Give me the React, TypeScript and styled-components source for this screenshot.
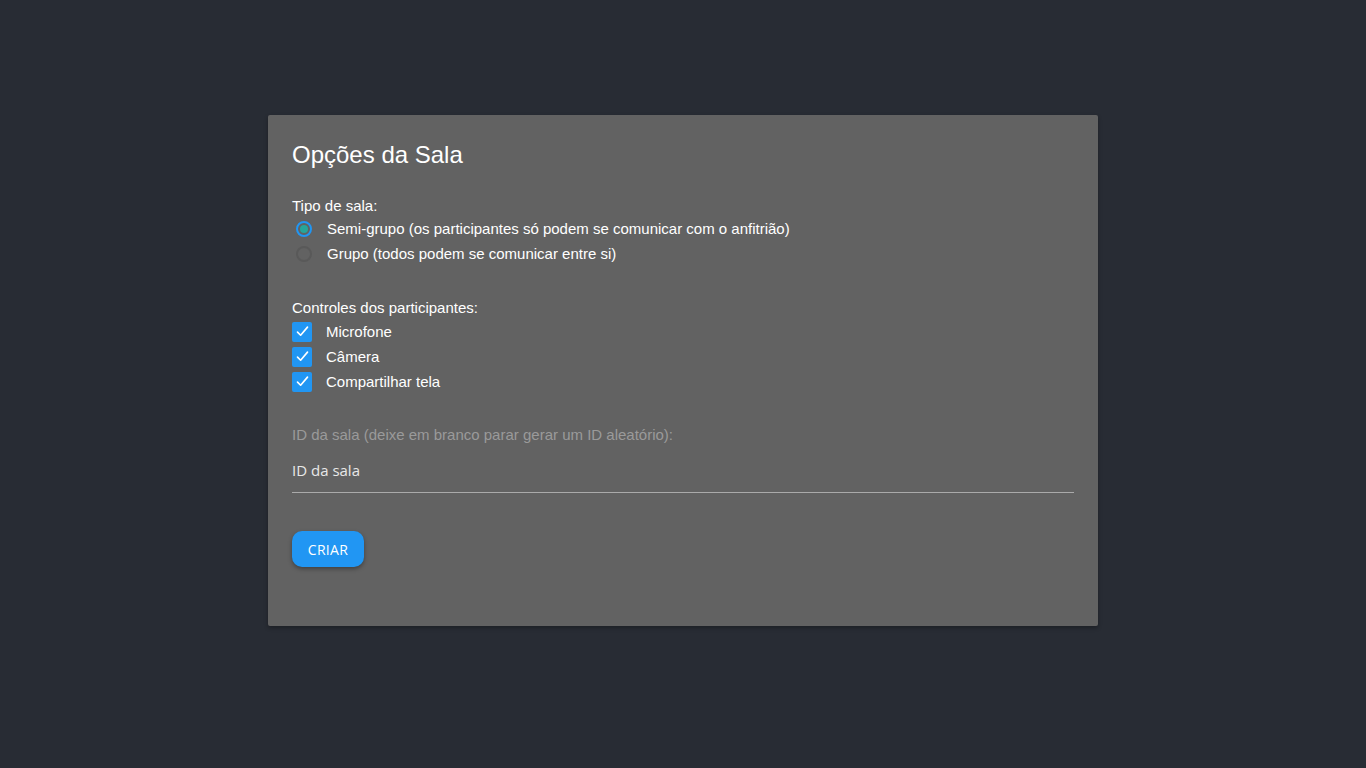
import styled, { createGlobalStyle } from "styled-components";

const GlobalStyle = createGlobalStyle`
    html, body {
        margin: 0;
        padding: 0;
        background-color: #282c34;
        font-family: "Liberation Sans", Arial, sans-serif;
    }
`;

const Page = styled.div`
    min-height: 768px;
    display: flex;
    justify-content: center;
    align-items: flex-start;
    padding-top: 115px;
    box-sizing: border-box;
`;

const Card = styled.div`
    width: 830px;
    height: 511px;
    box-sizing: border-box;
    padding: 24px 24px;
    background-color: #626262;
    border-radius: 2px;
    box-shadow: 0 2px 4px rgba(0, 0, 0, 0.3);
    color: #ffffff;
`;

const Title = styled.h2`
    margin: 0;
    font-size: 24px;
    font-weight: normal;
    line-height: 32px;
`;

const Section = styled.div<{ $top: number }>`
    display: flex;
    flex-direction: column;
    margin-top: ${(p) => p.$top}px;
`;

const Label = styled.div<{ $gap?: number }>`
    font-size: 15px;
    line-height: 20px;
    margin-bottom: ${(p) => p.$gap ?? 0}px;
`;

const Option = styled.label`
    display: flex;
    align-items: center;
    gap: 14px;
    height: 25px;
    font-size: 15px;
    cursor: pointer;
`;

const Radio = styled.span<{ $checked: boolean }>`
    box-sizing: border-box;
    width: 16px;
    height: 16px;
    margin-left: 4px;
    margin-right: 1px;
    border-radius: 50%;
    border: 2px solid ${(p) => (p.$checked ? "#2196f3" : "#595959")};
    display: flex;
    align-items: center;
    justify-content: center;
    &::after {
        content: "";
        width: 8px;
        height: 8px;
        border-radius: 50%;
        background-color: ${(p) => (p.$checked ? "#26a69a" : "transparent")};
    }
`;

const Check = styled.span`
    width: 20px;
    height: 20px;
    border-radius: 2px;
    background-color: #2196f3;
    display: flex;
    align-items: center;
    justify-content: center;
    svg {
        width: 15px;
        height: 15px;
    }
`;

const HelpLabel = styled.div`
    font-size: 15px;
    line-height: 20px;
    color: #9a9a9a;
`;

const Input = styled.input`
    margin-top: 3px;
    width: 100%;
    box-sizing: border-box;
    height: 45px;
    padding: 0;
    background: transparent;
    border: none;
    border-bottom: 1px solid #aaaaaa;
    color: #ffffff;
    font-family: "Open Sans", "Noto Sans", sans-serif;
    font-size: 15px;
    outline: none;
    &::placeholder {
        color: #e8e8e8;
    }
`;

const Button = styled.button`
    display: block;
    margin-top: 38px;
    width: 72px;
    height: 36px;
    border: none;
    border-radius: 10px;
    background-color: #2196f3;
    color: #ffffff;
    font-family: "Open Sans", "Noto Sans", sans-serif;
    font-size: 14px;
    letter-spacing: 0.3px;
    box-shadow: 0 2px 4px rgba(0, 0, 0, 0.35);
    cursor: pointer;
`;

const CheckIcon = () => (
    <svg viewBox="0 0 24 24" fill="none" stroke="#ffffff" strokeWidth="2.6" strokeLinecap="round" strokeLinejoin="round">
        <path d="M4 13l5 5L20 5" />
    </svg>
);

const App = () => {
    const controles = ["Microfone", "Câmera", "Compartilhar tela"];

    return (
        <>
            <GlobalStyle />
            <Page>
                <Card>
                    <Title>Opções da Sala</Title>
                    <Section $top={25}>
                        <Label>Tipo de sala:</Label>
                        <Option>
                            <Radio $checked={true} />
                            Semi-grupo (os participantes só podem se comunicar com o anfitrião)
                        </Option>
                        <Option>
                            <Radio $checked={false} />
                            Grupo (todos podem se comunicar entre si)
                        </Option>
                    </Section>
                    <Section $top={32}>
                        <Label $gap={1}>Controles dos participantes:</Label>
                        {controles.map((c) => (
                            <Option key={c}>
                                <Check>
                                    <CheckIcon />
                                </Check>
                                {c}
                            </Option>
                        ))}
                    </Section>
                    <Section $top={31}>
                        <HelpLabel>ID da sala (deixe em branco parar gerar um ID aleatório):</HelpLabel>
                        <Input placeholder="ID da sala" />
                    </Section>
                    <Button>CRIAR</Button>
                </Card>
            </Page>
        </>
    );
};

export default App;
